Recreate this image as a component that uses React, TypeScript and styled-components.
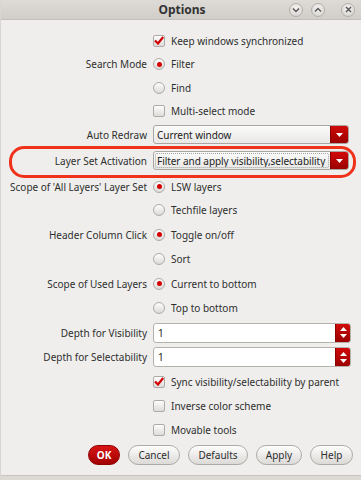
import React from "react";
import styled, { createGlobalStyle } from "styled-components";

const Global = createGlobalStyle`
  html, body { margin: 0; padding: 0; background: #efeeed; }
  body { font-family: "Noto Sans", "DejaVu Sans", sans-serif; }
`;

const Window = styled.div`
  width: 361px;
  height: 480px;
  box-sizing: border-box;
  background: #efeeed;
  border-left: 1px solid #d8d6d3;
  display: flex;
  flex-direction: column;
  color: #2e2e2e;
  font-size: 10px;
`;

const TitleBar = styled.div`
  height: 20px;
  flex: none;
  background: linear-gradient(#dedbd7, #d1cdc8);
  border-bottom: 1px solid #c3bfba;
  box-sizing: border-box;
  display: grid;
  grid-template-columns: 1fr auto 1fr;
  align-items: center;
`;

const Title = styled.div`
  grid-column: 2;
  font-weight: bold;
  font-size: 12px;
  color: #333;
  padding-left: 2px;
`;

const TitleButtons = styled.div`
  grid-column: 3;
  justify-self: end;
  display: flex;
  align-items: center;
  gap: 8px;
  padding-right: 6px;
`;

const TitleBtn = styled.div<{ $gap?: number }>`
  width: 14px;
  height: 14px;
  border-radius: 50%;
  box-sizing: border-box;
  border: 1px solid #b3afaa;
  background: radial-gradient(circle at 50% 35%, #f4f3f1, #d3d0cc);
  display: flex;
  align-items: center;
  justify-content: center;
  margin-left: ${(p) => p.$gap ?? 0}px;
`;

const Body = styled.div`
  flex: 1;
  padding-top: 8.75px;
  display: flex;
  flex-direction: column;
`;

const Row = styled.div<{ $h: number }>`
  height: ${(p) => p.$h}px;
  display: grid;
  grid-template-columns: 146px minmax(0, 1fr);
  column-gap: 6px;
  align-items: center;
  position: relative;
  padding-right: 12px;
`;

const Label = styled.div`
  grid-column: 1;
  text-align: right;
  white-space: nowrap;
`;

const Control = styled.div`
  grid-column: 2;
  display: flex;
  align-items: center;
  gap: 6px;
  min-width: 0;
`;

const Highlight = styled.div`
  position: absolute;
  left: 8px;
  right: 5px;
  top: 0px;
  bottom: -3px;
  border: 3px solid #f0321b;
  border-radius: 15px;
  pointer-events: none;
`;

const Box = styled.span`
  width: 12px;
  height: 12px;
  box-sizing: border-box;
  border: 1px solid #aeaba7;
  border-radius: 2px;
  background: linear-gradient(#fdfdfd, #dedcda);
  display: inline-flex;
  align-items: center;
  justify-content: center;
  flex: none;
`;

const RadioOuter = styled.span`
  width: 12px;
  height: 12px;
  box-sizing: border-box;
  border: 1px solid #aeaba7;
  border-radius: 50%;
  background: linear-gradient(#fdfdfd, #dcdad8);
  display: inline-flex;
  align-items: center;
  justify-content: center;
  flex: none;
`;

const Dot = styled.span`
  width: 5px;
  height: 5px;
  border-radius: 50%;
  background: #d40000;
`;

const Combo = styled.div`
  flex: 1;
  min-width: 0;
  height: 19px;
  box-sizing: border-box;
  border: 1px solid #a9a6a2;
  border-radius: 3px;
  background: linear-gradient(#fbfbfb, #e9e8e6);
  display: flex;
  align-items: stretch;
  overflow: hidden;
`;

const ComboText = styled.div<{ $focus?: boolean }>`
  flex: 1;
  min-width: 0;
  overflow: hidden;
  display: flex;
  align-items: center;
  padding-left: 1px;
  margin: 1px 1px 1px 1px;
  border: 1px dotted ${(p) => (p.$focus ? "#a0a0a0" : "transparent")};
  border-radius: 2px;
  white-space: nowrap;
  letter-spacing: -0.05px;
  color: #222;
`;

const RedBtn = styled.div<{ $w: number }>`
  width: ${(p) => p.$w}px;
  flex: none;
  background: linear-gradient(#d10a0a, #9b0000);
  border-left: 1px solid #8a0000;
  display: flex;
  flex-direction: column;
  align-items: center;
  justify-content: center;
  gap: 3px;
`;

const Spin = styled.div`
  flex: 1;
  height: 20px;
  box-sizing: border-box;
  border: 1px solid #b5b2ae;
  border-radius: 3px;
  background: #fff;
  display: flex;
  align-items: stretch;
  overflow: hidden;
  margin-right: -2px;
`;

const SpinText = styled.div`
  flex: 1;
  display: flex;
  align-items: center;
  padding-left: 4px;
  color: #222;
`;

const ButtonRow = styled.div`
  height: 24px;
  display: flex;
  justify-content: flex-end;
  align-items: center;
  gap: 8px;
  padding-right: 8px;
`;

const Btn = styled.button<{ $primary?: boolean; $w: number }>`
  width: ${(p) => p.$w}px;
  height: 20px;
  border-radius: 10px;
  font-family: inherit;
  font-size: 10px;
  padding: 0;
  cursor: pointer;
  border: 1px solid ${(p) => (p.$primary ? "#8e0000" : "#aeaba7")};
  background: ${(p) =>
    p.$primary
      ? "linear-gradient(#d81414, #a10000)"
      : "linear-gradient(#fdfdfd, #dcdad7)"};
  color: ${(p) => (p.$primary ? "#fff" : "#2e2e2e")};
  font-weight: ${(p) => (p.$primary ? "bold" : "normal")};
`;

const BottomEdge = styled.div`
  height: 4px;
  flex: none;
  background: #dcd9d5;
  border-top: 1px solid #c9c6c2;
`;

const Check = () => (
  <svg width="10" height="9" viewBox="0 0 10 9">
    <path d="M1 4.5 L4 7.5 L9.2 1" fill="none" stroke="#d00000" strokeWidth="2.2" />
  </svg>
);

const Checkbox = ({ checked, label }: { checked?: boolean; label: string }) => (
  <Control>
    <Box>{checked && <Check />}</Box>
    <span>{label}</span>
  </Control>
);

const Radio = ({ checked, label }: { checked?: boolean; label: string }) => (
  <Control>
    <RadioOuter>{checked && <Dot />}</RadioOuter>
    <span>{label}</span>
  </Control>
);

const Down = () => (
  <svg width="7" height="4" viewBox="0 0 7 4">
    <path d="M0 0 H7 L3.5 4 Z" fill="#fff" />
  </svg>
);
const Up = () => (
  <svg width="7" height="4" viewBox="0 0 7 4">
    <path d="M0 4 H7 L3.5 0 Z" fill="#fff" />
  </svg>
);

const ComboBox = ({ value, focus }: { value: string; focus?: boolean }) => (
  <Control>
    <Combo>
      <ComboText $focus={focus}>{value}</ComboText>
      <RedBtn $w={17}>
        <Down />
      </RedBtn>
    </Combo>
  </Control>
);

const SpinBox = ({ value }: { value: string }) => (
  <Control>
    <Spin>
      <SpinText>{value}</SpinText>
      <RedBtn $w={14}>
        <Up />
        <Down />
      </RedBtn>
    </Spin>
  </Control>
);

const chev = (d: string) => (
  <svg width="8" height="6" viewBox="0 0 8 6">
    <path d={d} fill="none" stroke="#555" strokeWidth="1.4" />
  </svg>
);

export default function App() {
  const R = 24.45;
  return (
    <>
      <Global />
      <Window>
        <TitleBar>
          <Title>Options</Title>
          <TitleButtons>
            <TitleBtn>{chev("M1 1.5 L4 4.5 L7 1.5")}</TitleBtn>
            <TitleBtn>{chev("M1 4.5 L4 1.5 L7 4.5")}</TitleBtn>
            <TitleBtn $gap={8}>
              <svg width="7" height="7" viewBox="0 0 7 7">
                <path d="M1 1 L6 6 M6 1 L1 6" stroke="#555" strokeWidth="1.4" />
              </svg>
            </TitleBtn>
          </TitleButtons>
        </TitleBar>
        <Body>
          <Row $h={23.5}>
            <Checkbox checked label="Keep windows synchronized" />
          </Row>
          <Row $h={23.5}>
            <Label>Search Mode</Label>
            <Radio checked label="Filter" />
          </Row>
          <Row $h={23.5}>
            <Radio label="Find" />
          </Row>
          <Row $h={23.5}>
            <Checkbox label="Multi-select mode" />
          </Row>
          <Row $h={23.5}>
            <Label>Auto Redraw</Label>
            <ComboBox value="Current window" />
          </Row>
          <Row $h={28.5}>
            <Highlight />
            <Label>Layer Set Activation</Label>
            <ComboBox focus value="Filter and apply visibility,selectability" />
          </Row>
          <Row $h={23.5}>
            <Label>Scope of 'All Layers' Layer Set</Label>
            <Radio checked label="LSW layers" />
          </Row>
          <Row $h={R}>
            <Radio label="Techfile layers" />
          </Row>
          <Row $h={R}>
            <Label>Header Column Click</Label>
            <Radio checked label="Toggle on/off" />
          </Row>
          <Row $h={R}>
            <Radio label="Sort" />
          </Row>
          <Row $h={R}>
            <Label>Scope of Used Layers</Label>
            <Radio checked label="Current to bottom" />
          </Row>
          <Row $h={R}>
            <Radio label="Top to bottom" />
          </Row>
          <Row $h={R}>
            <Label>Depth for Visibility</Label>
            <SpinBox value="1" />
          </Row>
          <Row $h={R}>
            <Label>Depth for Selectability</Label>
            <SpinBox value="1" />
          </Row>
          <Row $h={R}>
            <Checkbox checked label="Sync visibility/selectability by parent" />
          </Row>
          <Row $h={R}>
            <Checkbox label="Inverse color scheme" />
          </Row>
          <Row $h={R}>
            <Checkbox label="Movable tools" />
          </Row>
          <ButtonRow>
            <Btn $primary $w={32}>OK</Btn>
            <Btn $w={52}>Cancel</Btn>
            <Btn $w={60}>Defaults</Btn>
            <Btn $w={46}>Apply</Btn>
            <Btn $w={43}>Help</Btn>
          </ButtonRow>
        </Body>
        <BottomEdge />
      </Window>
    </>
  );
}
